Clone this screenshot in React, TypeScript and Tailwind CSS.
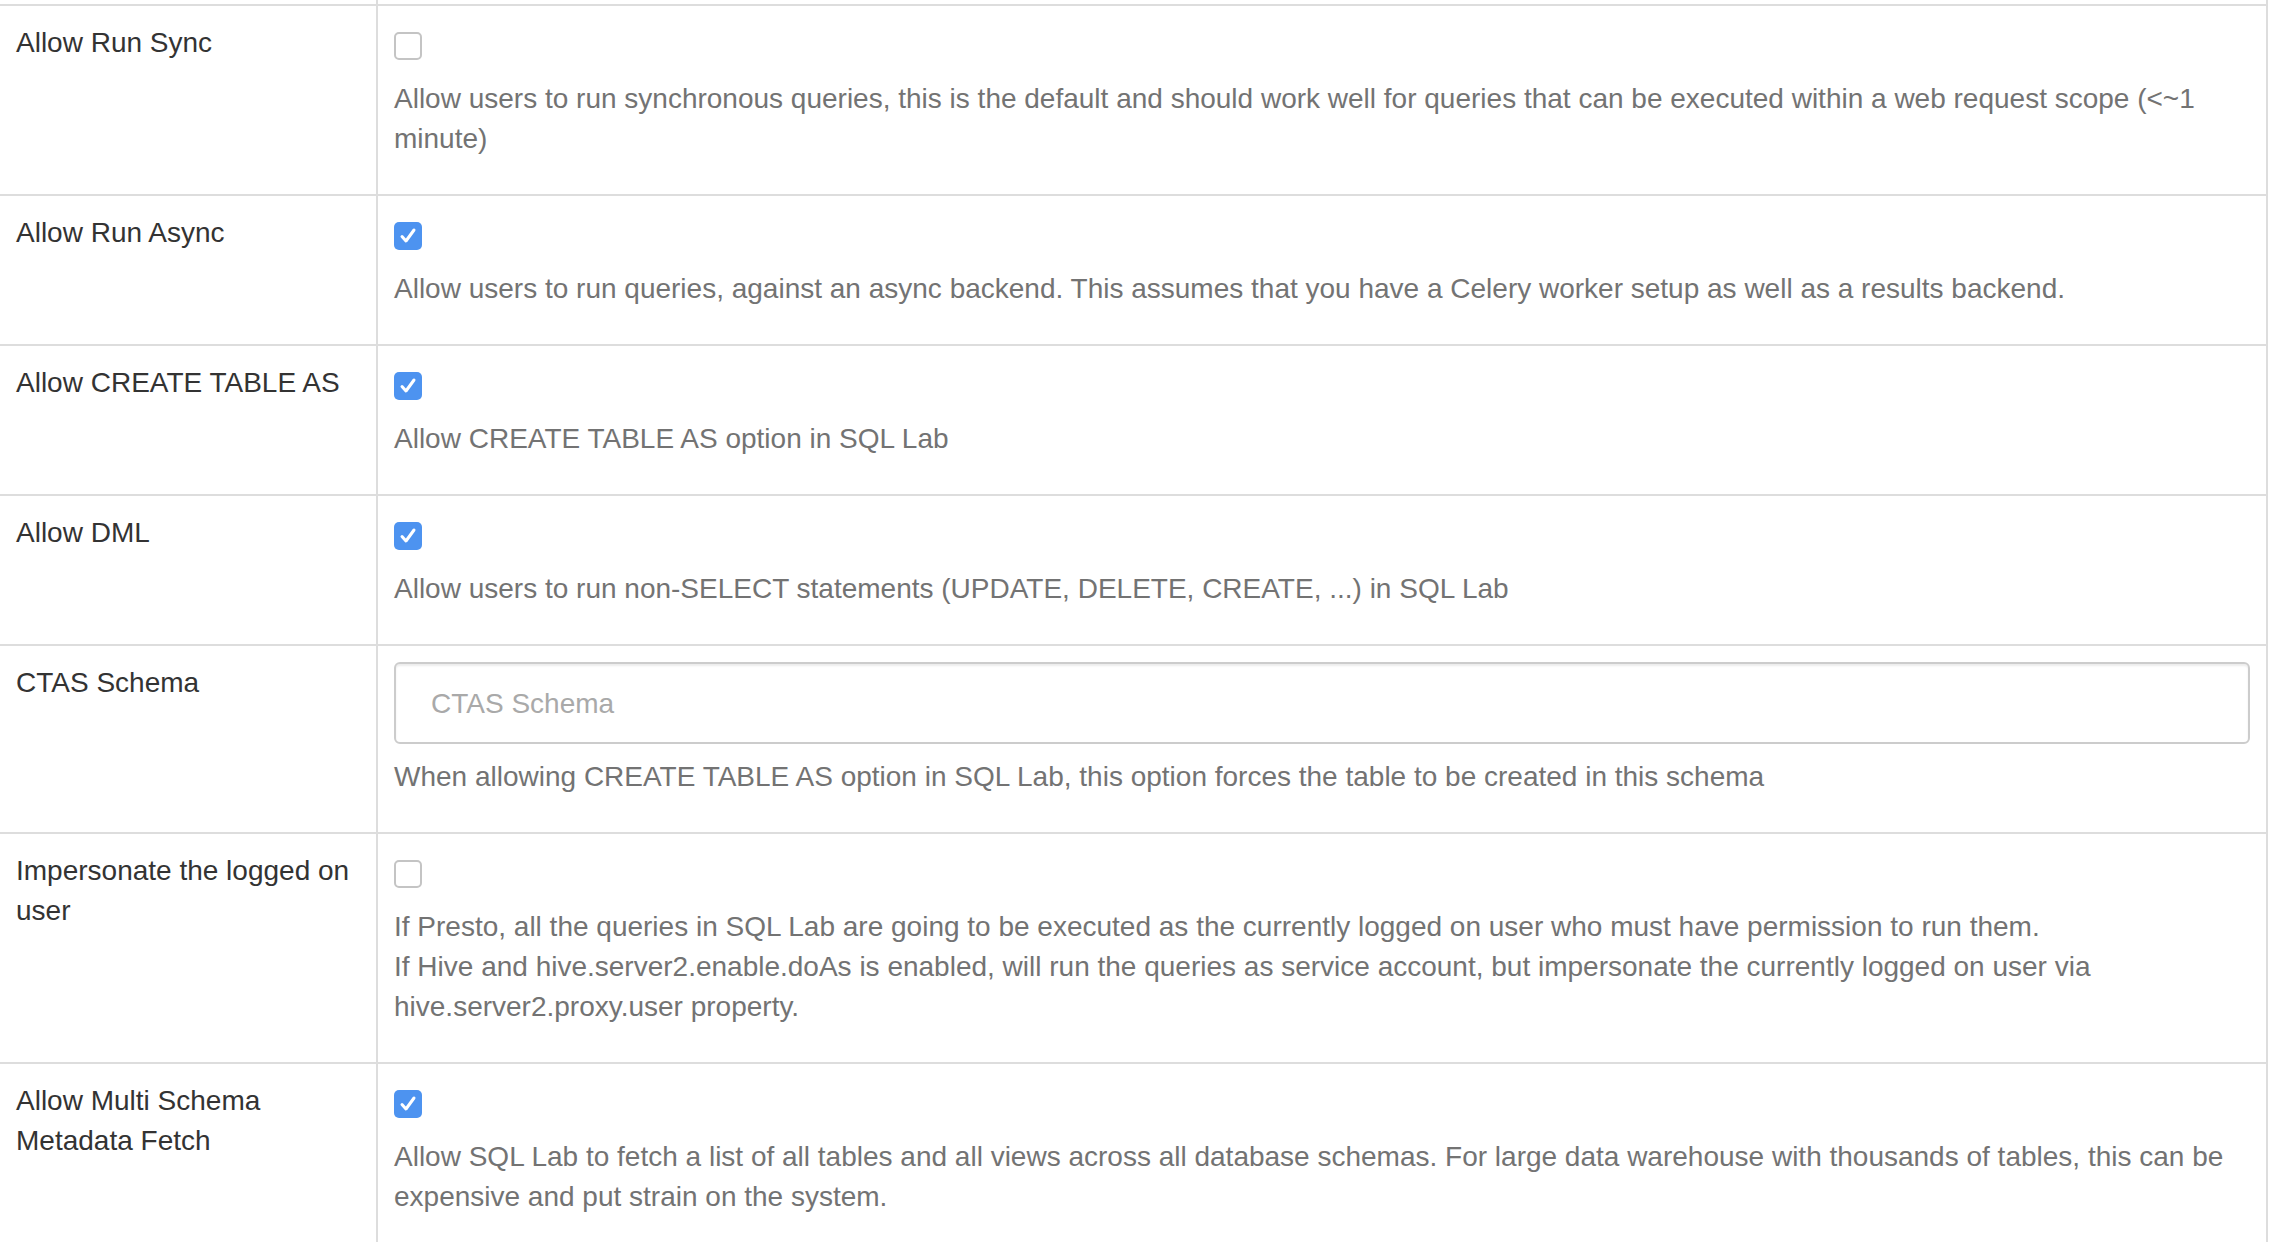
import React from "react";

type Row = {
  label: string;
  kind: "check" | "input";
  checked?: boolean;
  placeholder?: string;
  help: React.ReactNode;
};

const rows: Row[] = [
  {
    label: "Allow Run Sync",
    kind: "check",
    checked: false,
    help: "Allow users to run synchronous queries, this is the default and should work well for queries that can be executed within a web request scope (<~1 minute)",
  },
  {
    label: "Allow Run Async",
    kind: "check",
    checked: true,
    help: "Allow users to run queries, against an async backend. This assumes that you have a Celery worker setup as well as a results backend.",
  },
  {
    label: "Allow CREATE TABLE AS",
    kind: "check",
    checked: true,
    help: "Allow CREATE TABLE AS option in SQL Lab",
  },
  {
    label: "Allow DML",
    kind: "check",
    checked: true,
    help: "Allow users to run non-SELECT statements (UPDATE, DELETE, CREATE, ...) in SQL Lab",
  },
  {
    label: "CTAS Schema",
    kind: "input",
    placeholder: "CTAS Schema",
    help: "When allowing CREATE TABLE AS option in SQL Lab, this option forces the table to be created in this schema",
  },
  {
    label: "Impersonate the logged on user",
    kind: "check",
    checked: false,
    help: (
      <>
        If Presto, all the queries in SQL Lab are going to be executed as the currently logged on user who must have permission to run them.
        <br />
        If Hive and hive.server2.enable.doAs is enabled, will run the queries as service account, but impersonate the currently logged on user via hive.server2.proxy.user property.
      </>
    ),
  },
  {
    label: "Allow Multi Schema Metadata Fetch",
    kind: "check",
    checked: true,
    help: "Allow SQL Lab to fetch a list of all tables and all views across all database schemas. For large data warehouse with thousands of tables, this can be expensive and put strain on the system.",
  },
];

function Checkbox({ checked }: { checked?: boolean }) {
  if (checked) {
    return (
      <div className="mt-[10px] flex size-[28px] items-center justify-center rounded-[5px] bg-[#4d93f0]">
        <svg viewBox="0 0 28 28" className="size-[28px]" fill="none">
          <path d="M8 14.5l4 4.5 8-11" stroke="white" strokeWidth="3" strokeLinecap="round" strokeLinejoin="round" />
        </svg>
      </div>
    );
  }
  return <div className="mt-[10px] size-[28px] rounded-[5px] border-2 border-[#c4c4c4] bg-white" />;
}

export default function App() {
  return (
    <div className="min-h-screen bg-white font-['Liberation_Sans',Arial,sans-serif] text-[28px] leading-[40px]">
      <div className="w-[2268px]">
        <div className="ml-[376px] h-[4px] border-x-2 border-[#ddd]" />
        <div className="border-t-2 border-[#ddd]">
          {rows.map((row) => (
            <div key={row.label} className="flex border-b-2 border-[#ddd]">
              <div className="w-[376px] shrink-0 px-4 pt-[17px] pb-[15px] text-[#333]">{row.label}</div>
              <div className="min-w-0 flex-1 border-x-2 border-[#ddd] p-4">
                {row.kind === "check" ? (
                  <>
                    <Checkbox checked={row.checked} />
                    <p className="mt-[19px] mb-[19px] text-[#737373]">{row.help}</p>
                  </>
                ) : (
                  <>
                    <input
                      className="block h-[82px] w-full rounded-[6px] border-2 border-[#ccc] px-[35px] pt-[2px] text-[28px] text-[#555] shadow-[inset_0_2px_2px_rgba(0,0,0,0.075)] outline-none placeholder:text-[#a9a9a9]"
                      placeholder={row.placeholder}
                    />
                    <p className="mt-[13px] mb-[19px] text-[#737373]">{row.help}</p>
                  </>
                )}
              </div>
            </div>
          ))}
        </div>
      </div>
    </div>
  );
}
